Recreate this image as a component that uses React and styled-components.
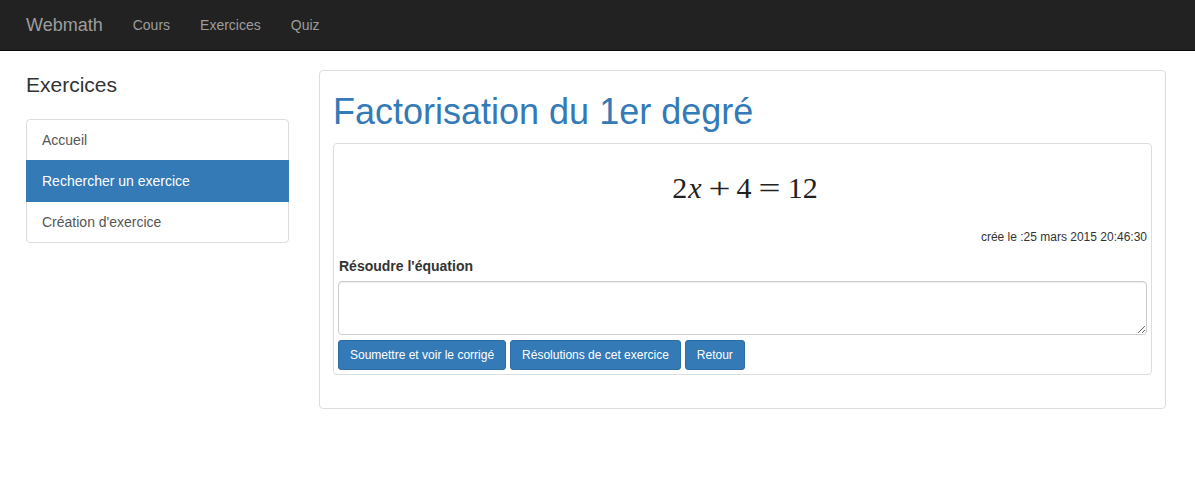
import React from 'react';
import styled, { createGlobalStyle } from 'styled-components';

const GlobalStyle = createGlobalStyle`
  * { box-sizing: border-box; }
  body {
    margin: 0;
    background: #fff;
    font-family: 'Liberation Sans', Arial, sans-serif;
    font-size: 14px;
    line-height: 1.42857;
    color: #333;
  }
`;

const Navbar = styled.nav`
  height: 51px;
  background: #222;
  border-bottom: 1px solid #080808;
  display: flex;
  align-items: center;
  padding-left: 11px;
`;

const Brand = styled.a`
  padding: 15px;
  font-size: 18px;
  line-height: 20px;
  color: #9d9d9d;
  text-decoration: none;
`;

const NavLink = styled.a`
  padding: 15px;
  font-size: 14px;
  line-height: 20px;
  color: #9d9d9d;
  text-decoration: none;
`;

const Page = styled.div`
  display: grid;
  grid-template-columns: 263px 1fr;
  column-gap: 30px;
  align-items: start;
  padding: 19px 29px 0 26px;
`;

const SideTitle = styled.h3`
  margin: 3px 0 23px;
  font-size: 21px;
  font-weight: 400;
  line-height: 1.1;
  color: #333;
`;

const ListGroup = styled.div`
  display: flex;
  flex-direction: column;
`;

const ListItem = styled.a`
  display: block;
  padding: 10px 15px;
  margin-bottom: -1px;
  border: 1px solid ${({ active }) => (active ? '#337ab7' : '#ddd')};
  background: ${({ active }) => (active ? '#337ab7' : '#fff')};
  color: ${({ active }) => (active ? '#fff' : '#555')};
  position: relative;
  z-index: ${({ active }) => (active ? 2 : 1)};
  text-decoration: none;
  line-height: 20px;

  &:first-child {
    border-top-left-radius: 4px;
    border-top-right-radius: 4px;
  }
  &:last-child {
    margin-bottom: 0;
    border-bottom-left-radius: 4px;
    border-bottom-right-radius: 4px;
  }
`;

const Panel = styled.div`
  border: 1px solid #ddd;
  border-radius: 4px;
  padding: 1px 13px 33px;
`;

const Title = styled.h1`
  margin: 20px 0 11px;
  font-size: 36px;
  font-weight: 400;
  line-height: 1.1;
  color: #337ab7;
`;

const InnerPanel = styled.div`
  border: 1px solid #ddd;
  border-radius: 4px;
  padding: 5px 4px 4px;
`;

const Equation = styled.div`
  height: 80px;
  display: flex;
  align-items: center;
  justify-content: center;
  font-family: 'Liberation Serif', 'Times New Roman', serif;
  font-size: 30px;
  color: #222;
  padding-left: 5px;
`;

const MathVar = styled.i`
  font-style: italic;
  margin-left: 1px;
`;

/* operators are wider in the TeX font, so stretch them a little */
const MathOp = styled.span`
  display: inline-block;
  margin: 0 ${({ space }) => space}em;
  transform: scaleX(1.3);
`;

const DateLine = styled.div`
  text-align: right;
  font-size: 12px;
  line-height: 17px;
  margin-bottom: 10px;
  color: #333;
`;

const Label = styled.label`
  display: block;
  font-weight: 700;
  line-height: 20px;
  margin-bottom: 5px;
  padding-left: 1px;
`;

const TextArea = styled.textarea`
  display: block;
  width: 100%;
  height: 54px;
  border: 1px solid #ccc;
  border-radius: 4px;
  box-shadow: inset 0 1px 1px rgba(0, 0, 0, 0.075);
  padding: 6px 12px;
  font-family: inherit;
  font-size: 14px;
  resize: vertical;
`;

const Actions = styled.div`
  display: flex;
  gap: 4px;
  margin-top: 5px;
`;

const Button = styled.button`
  height: 30px;
  padding: 5px 11px;
  font-family: 'Liberation Sans', Arial, sans-serif;
  font-size: 12px;
  line-height: 1.5;
  color: #fff;
  background: #337ab7;
  border: 1px solid #2e6da4;
  border-radius: 3px;
  cursor: pointer;
`;

export default function App() {
  return (
    <>
      <GlobalStyle />
      <Navbar>
        <Brand href="#">Webmath</Brand>
        <NavLink href="#">Cours</NavLink>
        <NavLink href="#">Exercices</NavLink>
        <NavLink href="#">Quiz</NavLink>
      </Navbar>
      <Page>
        <aside>
          <SideTitle>Exercices</SideTitle>
          <ListGroup>
            <ListItem href="#">Accueil</ListItem>
            <ListItem href="#" active>Rechercher un exercice</ListItem>
            <ListItem href="#">Création d'exercice</ListItem>
          </ListGroup>
        </aside>
        <Panel>
          <Title>Factorisation du 1er degré</Title>
          <InnerPanel>
            <Equation>
              <span>2</span>
              <MathVar>x</MathVar>
              <MathOp space={0.3}>+</MathOp>
              <span>4</span>
              <MathOp space={0.32}>=</MathOp>
              <span>12</span>
            </Equation>
            <DateLine>crée le :25 mars 2015 20:46:30</DateLine>
            <Label>Résoudre l'équation</Label>
            <TextArea />
            <Actions>
              <Button>Soumettre et voir le corrigé</Button>
              <Button>Résolutions de cet exercice</Button>
              <Button>Retour</Button>
            </Actions>
          </InnerPanel>
        </Panel>
      </Page>
    </>
  );
}
